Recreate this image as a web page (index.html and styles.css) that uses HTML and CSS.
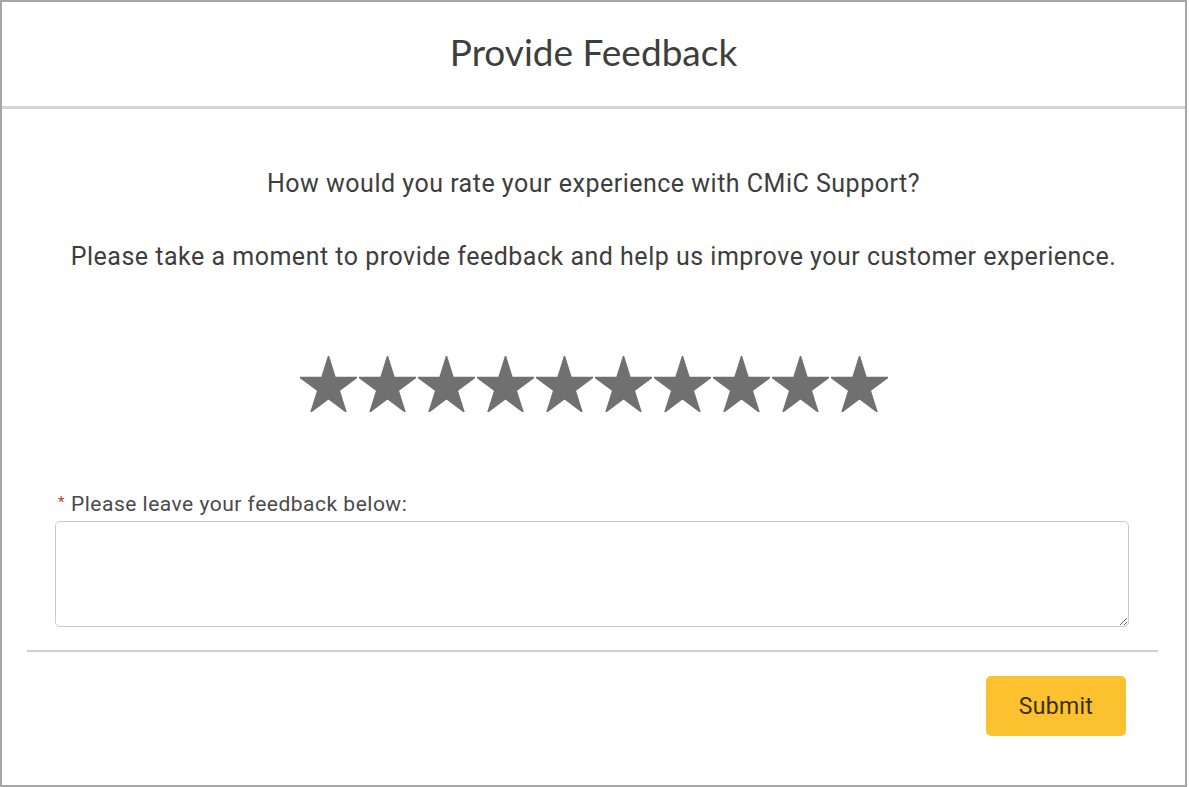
FILE: index.html
```html
<!DOCTYPE html>
<html>
	<head>
		<link rel="stylesheet" href="styles.css">
		<title>Provide Feedback</title>
	</head>
	<body>
		<main class="modal">
			<header class="modal-header">
				<h1>Provide Feedback</h1>
			</header>
			<section class="modal-body">
				<p class="question">How would you rate your experience with CMiC Support?</p>
				<p class="question">Please take a moment to provide feedback and help us improve your customer experience.</p>
				<div class="stars">
					<svg class="star" viewBox="0 0 95.1 90.45" preserveAspectRatio="none"><polygon points="47.55,0 58.78,34.55 95.1,34.55 65.71,55.9 76.94,90.45 47.55,69.1 18.16,90.45 29.39,55.9 0,34.55 36.32,34.55"/></svg>
					<svg class="star" viewBox="0 0 95.1 90.45" preserveAspectRatio="none"><polygon points="47.55,0 58.78,34.55 95.1,34.55 65.71,55.9 76.94,90.45 47.55,69.1 18.16,90.45 29.39,55.9 0,34.55 36.32,34.55"/></svg>
					<svg class="star" viewBox="0 0 95.1 90.45" preserveAspectRatio="none"><polygon points="47.55,0 58.78,34.55 95.1,34.55 65.71,55.9 76.94,90.45 47.55,69.1 18.16,90.45 29.39,55.9 0,34.55 36.32,34.55"/></svg>
					<svg class="star" viewBox="0 0 95.1 90.45" preserveAspectRatio="none"><polygon points="47.55,0 58.78,34.55 95.1,34.55 65.71,55.9 76.94,90.45 47.55,69.1 18.16,90.45 29.39,55.9 0,34.55 36.32,34.55"/></svg>
					<svg class="star" viewBox="0 0 95.1 90.45" preserveAspectRatio="none"><polygon points="47.55,0 58.78,34.55 95.1,34.55 65.71,55.9 76.94,90.45 47.55,69.1 18.16,90.45 29.39,55.9 0,34.55 36.32,34.55"/></svg>
					<svg class="star" viewBox="0 0 95.1 90.45" preserveAspectRatio="none"><polygon points="47.55,0 58.78,34.55 95.1,34.55 65.71,55.9 76.94,90.45 47.55,69.1 18.16,90.45 29.39,55.9 0,34.55 36.32,34.55"/></svg>
					<svg class="star" viewBox="0 0 95.1 90.45" preserveAspectRatio="none"><polygon points="47.55,0 58.78,34.55 95.1,34.55 65.71,55.9 76.94,90.45 47.55,69.1 18.16,90.45 29.39,55.9 0,34.55 36.32,34.55"/></svg>
					<svg class="star" viewBox="0 0 95.1 90.45" preserveAspectRatio="none"><polygon points="47.55,0 58.78,34.55 95.1,34.55 65.71,55.9 76.94,90.45 47.55,69.1 18.16,90.45 29.39,55.9 0,34.55 36.32,34.55"/></svg>
					<svg class="star" viewBox="0 0 95.1 90.45" preserveAspectRatio="none"><polygon points="47.55,0 58.78,34.55 95.1,34.55 65.71,55.9 76.94,90.45 47.55,69.1 18.16,90.45 29.39,55.9 0,34.55 36.32,34.55"/></svg>
					<svg class="star" viewBox="0 0 95.1 90.45" preserveAspectRatio="none"><polygon points="47.55,0 58.78,34.55 95.1,34.55 65.71,55.9 76.94,90.45 47.55,69.1 18.16,90.45 29.39,55.9 0,34.55 36.32,34.55"/></svg>
				</div>
				<div class="field">
					<label for="feedback"><abbr class="required" title="required">*</abbr>Please leave your feedback below:</label>
					<textarea id="feedback"></textarea>
				</div>
			</section>
			<footer class="modal-footer">
				<button class="submit" type="button">Submit</button>
			</footer>
		</main>
	</body>
</html>
```
FILE: styles.css
```css
html, body{ margin: 0; padding: 0; background: #fff; }
body{ font-family: Roboto, "Liberation Sans", sans-serif; color: #3e3e3c; }

.modal{ box-sizing: border-box; width: 1187px; height: 787px; border: 2px solid #a6a6a6; display: flex; flex-direction: column; }

.modal-header{ height: 104px; border-bottom: 3px solid #d4d4d4; display: flex; align-items: center; justify-content: center; }
.modal-header h1{ margin: 0; font-family: Lato, "Open Sans", sans-serif; font-weight: 400; font-size: 37px; color: #3e3e3c; padding-bottom: 6px; }

.modal-body{ padding: 60px 25px 0; display: flex; flex-direction: column; align-items: center; }
.question{ margin: 0 0 43px; font-size: 25px; line-height: 30px; letter-spacing: 0.5px; text-align: center; }

.stars{ display: flex; gap: 2px; margin-top: 41px; }
.star{ width: 57px; height: 56px; fill: #707070; stroke: #707070; stroke-width: 2; stroke-linejoin: round; }

.field{ align-self: stretch; margin-top: 78px; padding: 0 31px 0 28px; display: flex; flex-direction: column; }
.field label{ padding-left: 3px; font-size: 21px; line-height: 24px; letter-spacing: 0.5px; color: #4a4a4a; margin-bottom: 5px; }
.required{ color: #c23934; text-decoration: none; border: none; margin-right: 6px; font-size: 15px; vertical-align: 4px; }
.field textarea{ height: 106px; box-sizing: border-box; border: 1px solid #c9c9c9; border-radius: 5px; resize: vertical; font: inherit; }

.modal-footer{ margin: 23px 27px 0 25px; border-top: 2px solid #d0d0d0; padding: 24px 32px 0 0; display: flex; justify-content: flex-end; }
.submit{ width: 140px; height: 60px; background: #fcc12e; border: none; border-radius: 5px; font-family: Roboto, sans-serif; font-size: 23px; letter-spacing: 0.3px; color: #3b2e00; }
```
